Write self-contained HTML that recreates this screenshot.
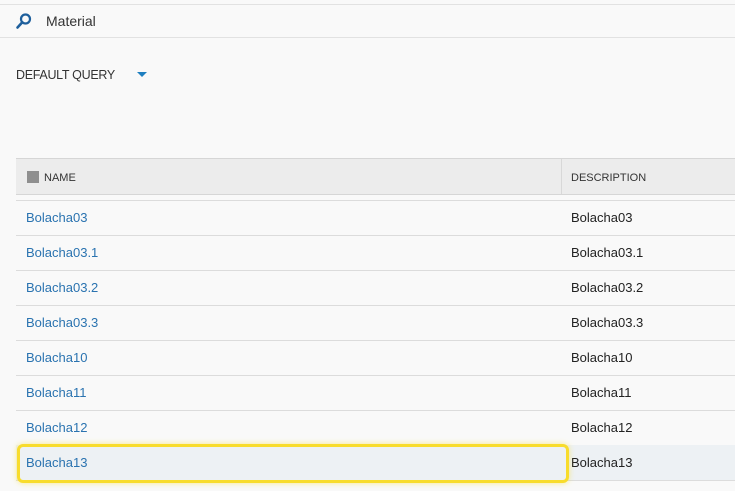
<!DOCTYPE html>
<html><head><style>
body{margin:0;width:735px;height:491px;background:#f9f9f9;font-family:"Liberation Sans",sans-serif;position:relative;overflow:hidden;color:#333}
.a{position:absolute}
.row{position:absolute;left:16px;width:719px;height:35px;border-bottom:1px solid #dcdcdc;font-size:13px}
.row span{position:absolute;top:10px}
.n{left:10px;color:#2a73b0}
.d{left:555px;color:#222}
</style></head><body>
<div class="a" style="top:4px;left:0;width:735px;border-top:1px solid #e2e2e2"></div>
<div class="a" style="top:37px;left:0;width:735px;border-top:1px solid #e2e2e2"></div>
<svg class="a" style="left:15px;top:12px" width="18" height="18" viewBox="0 0 18 18"><circle cx="10.5" cy="7" r="4.5" fill="none" stroke="#1e5f9c" stroke-width="2.2"/><line x1="7.3" y1="10.3" x2="2.5" y2="15.5" stroke="#1e5f9c" stroke-width="2.6" stroke-linecap="round"/></svg>
<div class="a" style="left:46px;top:13px;font-size:14px;color:#333">Material</div>
<div class="a" style="left:16px;top:68px;font-size:12.5px;letter-spacing:-0.3px;color:#333">DEFAULT QUERY</div>
<div class="a" style="left:137px;top:72px;width:0;height:0;border-left:5px solid transparent;border-right:5px solid transparent;border-top:5px solid #1e7fc0"></div>
<div class="a" style="left:16px;top:158px;width:719px;height:35px;background:#ececec;border-top:1px solid #d6d6d6;border-bottom:1px solid #d6d6d6"></div>
<div class="a" style="left:561px;top:159px;height:35px;border-left:1px solid #d8d8d8"></div>
<div class="a" style="left:27px;top:171px;width:12px;height:12px;background:#8f8f8f"></div>
<div class="a" style="left:44px;top:172px;font-size:11px;color:#333">NAME</div>
<div class="a" style="left:571px;top:172px;font-size:11px;color:#333">DESCRIPTION</div>
<div class="a" style="left:16px;top:200px;width:719px;border-top:1px solid #dcdcdc"></div>
<div class="row" style="top:200px"><span class="n">Bolacha03</span><span class="d">Bolacha03</span></div>
<div class="row" style="top:235px"><span class="n">Bolacha03.1</span><span class="d">Bolacha03.1</span></div>
<div class="row" style="top:270px"><span class="n">Bolacha03.2</span><span class="d">Bolacha03.2</span></div>
<div class="row" style="top:305px"><span class="n">Bolacha03.3</span><span class="d">Bolacha03.3</span></div>
<div class="row" style="top:340px"><span class="n">Bolacha10</span><span class="d">Bolacha10</span></div>
<div class="row" style="top:375px"><span class="n">Bolacha11</span><span class="d">Bolacha11</span></div>
<div class="row" style="top:410px"><span class="n">Bolacha12</span><span class="d">Bolacha12</span></div>
<div class="row" style="top:445px;background:#edf1f4"><span class="n">Bolacha13</span><span class="d">Bolacha13</span></div>
<div class="a" style="left:17px;top:444px;width:546px;height:33px;border:3px solid #f8dc2c;border-radius:6px;box-shadow:0 0 6px rgba(250,225,60,.6)"></div>
</body></html>
